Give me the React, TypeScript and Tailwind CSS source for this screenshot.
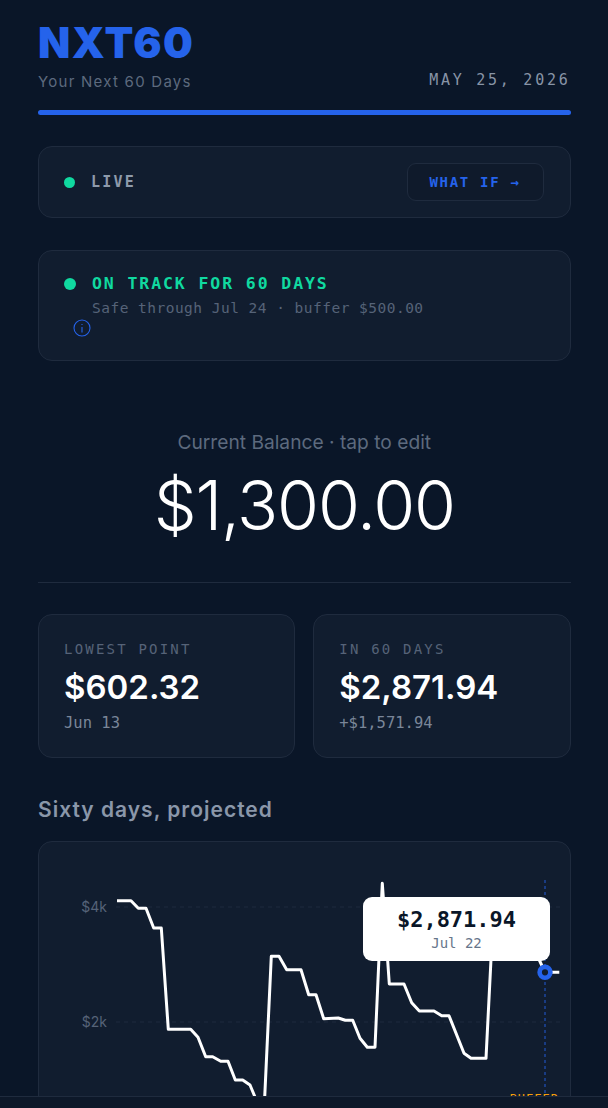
const sans = "font-['Inter',sans-serif]";
const mono = "font-['DejaVu_Sans_Mono',monospace]";

// page coordinates of the projected balance line
const line = [
  [117, 900.7], [131, 900.7], [138.3, 908.3], [146, 908.3], [153.7, 928], [161.3, 928],
  [168.3, 1029.3], [190.7, 1029.3], [198, 1037.3], [205.7, 1056.7], [212.7, 1056.7],
  [220.7, 1061.3], [228, 1061.3], [235.3, 1080], [242.7, 1080], [250, 1085], [257.5, 1103],
  [264, 1112], [271.3, 956.3], [279, 956.3], [286.7, 969.7], [301, 969.7], [308.7, 994.7],
  [316, 994.7], [323.7, 1018.7], [338.3, 1018], [345.3, 1020.3], [352.7, 1020.3], [360, 1038.3],
  [367.3, 1047.3], [375, 1047.3], [382.3, 883.3], [389.3, 984], [404, 984], [411.7, 1002.7],
  [419.3, 1011], [434, 1011], [441.7, 1015.7], [449, 1015.7], [464, 1053.3], [471, 1058.3],
  [486, 1058.3], [494, 900], [537, 955], [545, 972.3], [559.3, 972.3],
];

function StatCard({ label, value, sub }: { label: string; value: string; sub: string }) {
  return (
    <div className="flex-1 h-[144px] rounded-[14px] border border-[#1f2b3e] bg-[#111d2f] pl-[25px] pt-[25px]">
      <div className={`${mono} text-[14px] leading-[18px] tracking-[2.2px] text-[#566378]`}>{label}</div>
      <div className={`${sans} mt-[8px] text-[33px] leading-[42px] font-semibold text-white`}>{value}</div>
      <div className={`${mono} mt-[5px] text-[15.5px] leading-[20px] text-[#7a8699]`}>{sub}</div>
    </div>
  );
}

export default function App() {
  return (
    <div className={`${sans} relative h-[1108px] w-[608px] overflow-hidden bg-[#0a1628]`}>
      <div className="pl-[38px] pr-[37.5px] pt-[16px]">
        {/* Header */}
        <header className="flex items-end justify-between">
          <div>
            <h1 className="text-[42px] leading-[54px] font-black tracking-[1.4px] text-[#2563eb]">NXT60</h1>
            <p className="mt-[1px] text-[15px] leading-[22px] tracking-[1.25px] text-[#5d6a7e]">Your Next 60 Days</p>
          </div>
          <div className={`${mono} mb-[2px] text-[15px] leading-[22px] tracking-[2.75px] text-[#8894a6]`}>MAY 25, 2026</div>
        </header>
        <div className="mt-[17px] h-[5px] rounded-full bg-[#2563eb]" />

        {/* Live */}
        <div className="mt-[31px] flex h-[72px] items-center justify-between rounded-[14px] border border-[#1f2b3e] bg-[#111d2f] pl-[25px] pr-[26px]">
          <div className="flex items-center gap-[16px]">
            <span className="size-[11px] rounded-full bg-[#10d9a0]" />
            <span className={`${mono} text-[15px] font-bold tracking-[2.2px] text-[#8e9aab]`}>LIVE</span>
          </div>
          <button className={`${mono} h-[38px] w-[137px] rounded-[9px] border border-[#1f2b3e] bg-[#0f1a2b] text-[14px] font-bold tracking-[1.7px] text-[#2563eb]`}>
            WHAT IF →
          </button>
        </div>

        {/* Status */}
        <div className="relative mt-[32px] h-[111px] rounded-[14px] border border-[#1f2b3e] bg-[#111d2f] pl-[25px] pt-[22px]">
          <div className="flex items-center gap-[16px]">
            <span className="size-[12px] rounded-full bg-[#10d9a0]" />
            <span className={`${mono} text-[16.5px] leading-[22px] font-bold tracking-[1.9px] text-[#10d9a0]`}>ON TRACK FOR 60 DAYS</span>
          </div>
          <p className={`${mono} ml-[28px] mt-[3px] text-[14.5px] leading-[20px] tracking-[0.48px] text-[#566378]`}>
            Safe through Jul 24 · buffer $500.00
          </p>
          <svg className="absolute left-[34px] top-[68px]" width="18" height="18" viewBox="0 0 18 18" fill="none" stroke="#2563eb" strokeWidth="1.1">
            <circle cx="9" cy="9" r="8" />
            <path d="M9 8v5.5" />
            <path d="M9 5v1" />
          </svg>
        </div>

        {/* Balance */}
        <div className="mt-[68px] text-center">
          <div className="text-[19.2px] leading-[26px] text-[#5d6a7e]">Current Balance · tap to edit</div>
          <div className="mt-[10px] text-[68px] leading-[80px] font-light tracking-[-1.2px] text-white">$1,300.00</div>
        </div>
        <div className="mt-[37px] h-px bg-[#1f2b3e]" />

        {/* Stats */}
        <div className="mt-[31px] flex gap-[18px]">
          <StatCard label="LOWEST POINT" value="$602.32" sub="Jun 13" />
          <StatCard label="IN 60 DAYS" value="$2,871.94" sub="+$1,571.94" />
        </div>

        {/* Chart */}
        <h2 className="mt-[37px] text-[21px] leading-[30px] font-semibold tracking-[1px] text-[#8a97aa]">Sixty days, projected</h2>
        <div className="relative mt-[16px] h-[400px] rounded-[14px] border border-[#1f2b3e] bg-[#111d2f]">
          <svg className="block" width="530" height="398" viewBox="39 842 530 398" fill="none">
            <path d="M116 907H560M116 1022H560" stroke="#1f2b3e" strokeWidth="1" strokeDasharray="4 4" />
            <text x="107" y="912" textAnchor="end" fontFamily="Inter, sans-serif" fontSize="14" fill="#566378">$4k</text>
            <text x="107" y="1027" textAnchor="end" fontFamily="Inter, sans-serif" fontSize="14" fill="#566378">$2k</text>
            <path d="M545 880V1110" stroke="#2563eb" strokeOpacity="0.75" strokeWidth="1.2" strokeDasharray="3 3" />
            <polyline points={line.map((p) => p.join(',')).join(' ')} stroke="#ffffff" strokeWidth="3" strokeLinejoin="round" />
            <circle cx="545" cy="972.3" r="5.4" fill="#111d2f" stroke="#2563eb" strokeWidth="4.6" />
            <text x="559" y="1102.5" textAnchor="end" fontFamily="DejaVu Sans Mono, monospace" fontSize="12" letterSpacing="1" fontWeight="500" fill="#f59e0b">BUFFER</text>
          </svg>
          {/* Tooltip */}
          <div className="absolute left-[324px] top-[55px] flex h-[64px] w-[187px] flex-col items-center justify-center rounded-[9px] bg-white">
            <div className={`${mono} text-[22px] leading-[28px] font-bold text-[#0a1628]`}>$2,871.94</div>
            <div className={`${mono} text-[14px] leading-[18px] text-[#66758a]`}>Jul 22</div>
          </div>
        </div>
      </div>

      {/* Bottom bar */}
      <div className="absolute inset-x-0 bottom-0 h-[12px] border-t border-[#1f2b3e] bg-[#0d1829]" />
    </div>
  );
}
